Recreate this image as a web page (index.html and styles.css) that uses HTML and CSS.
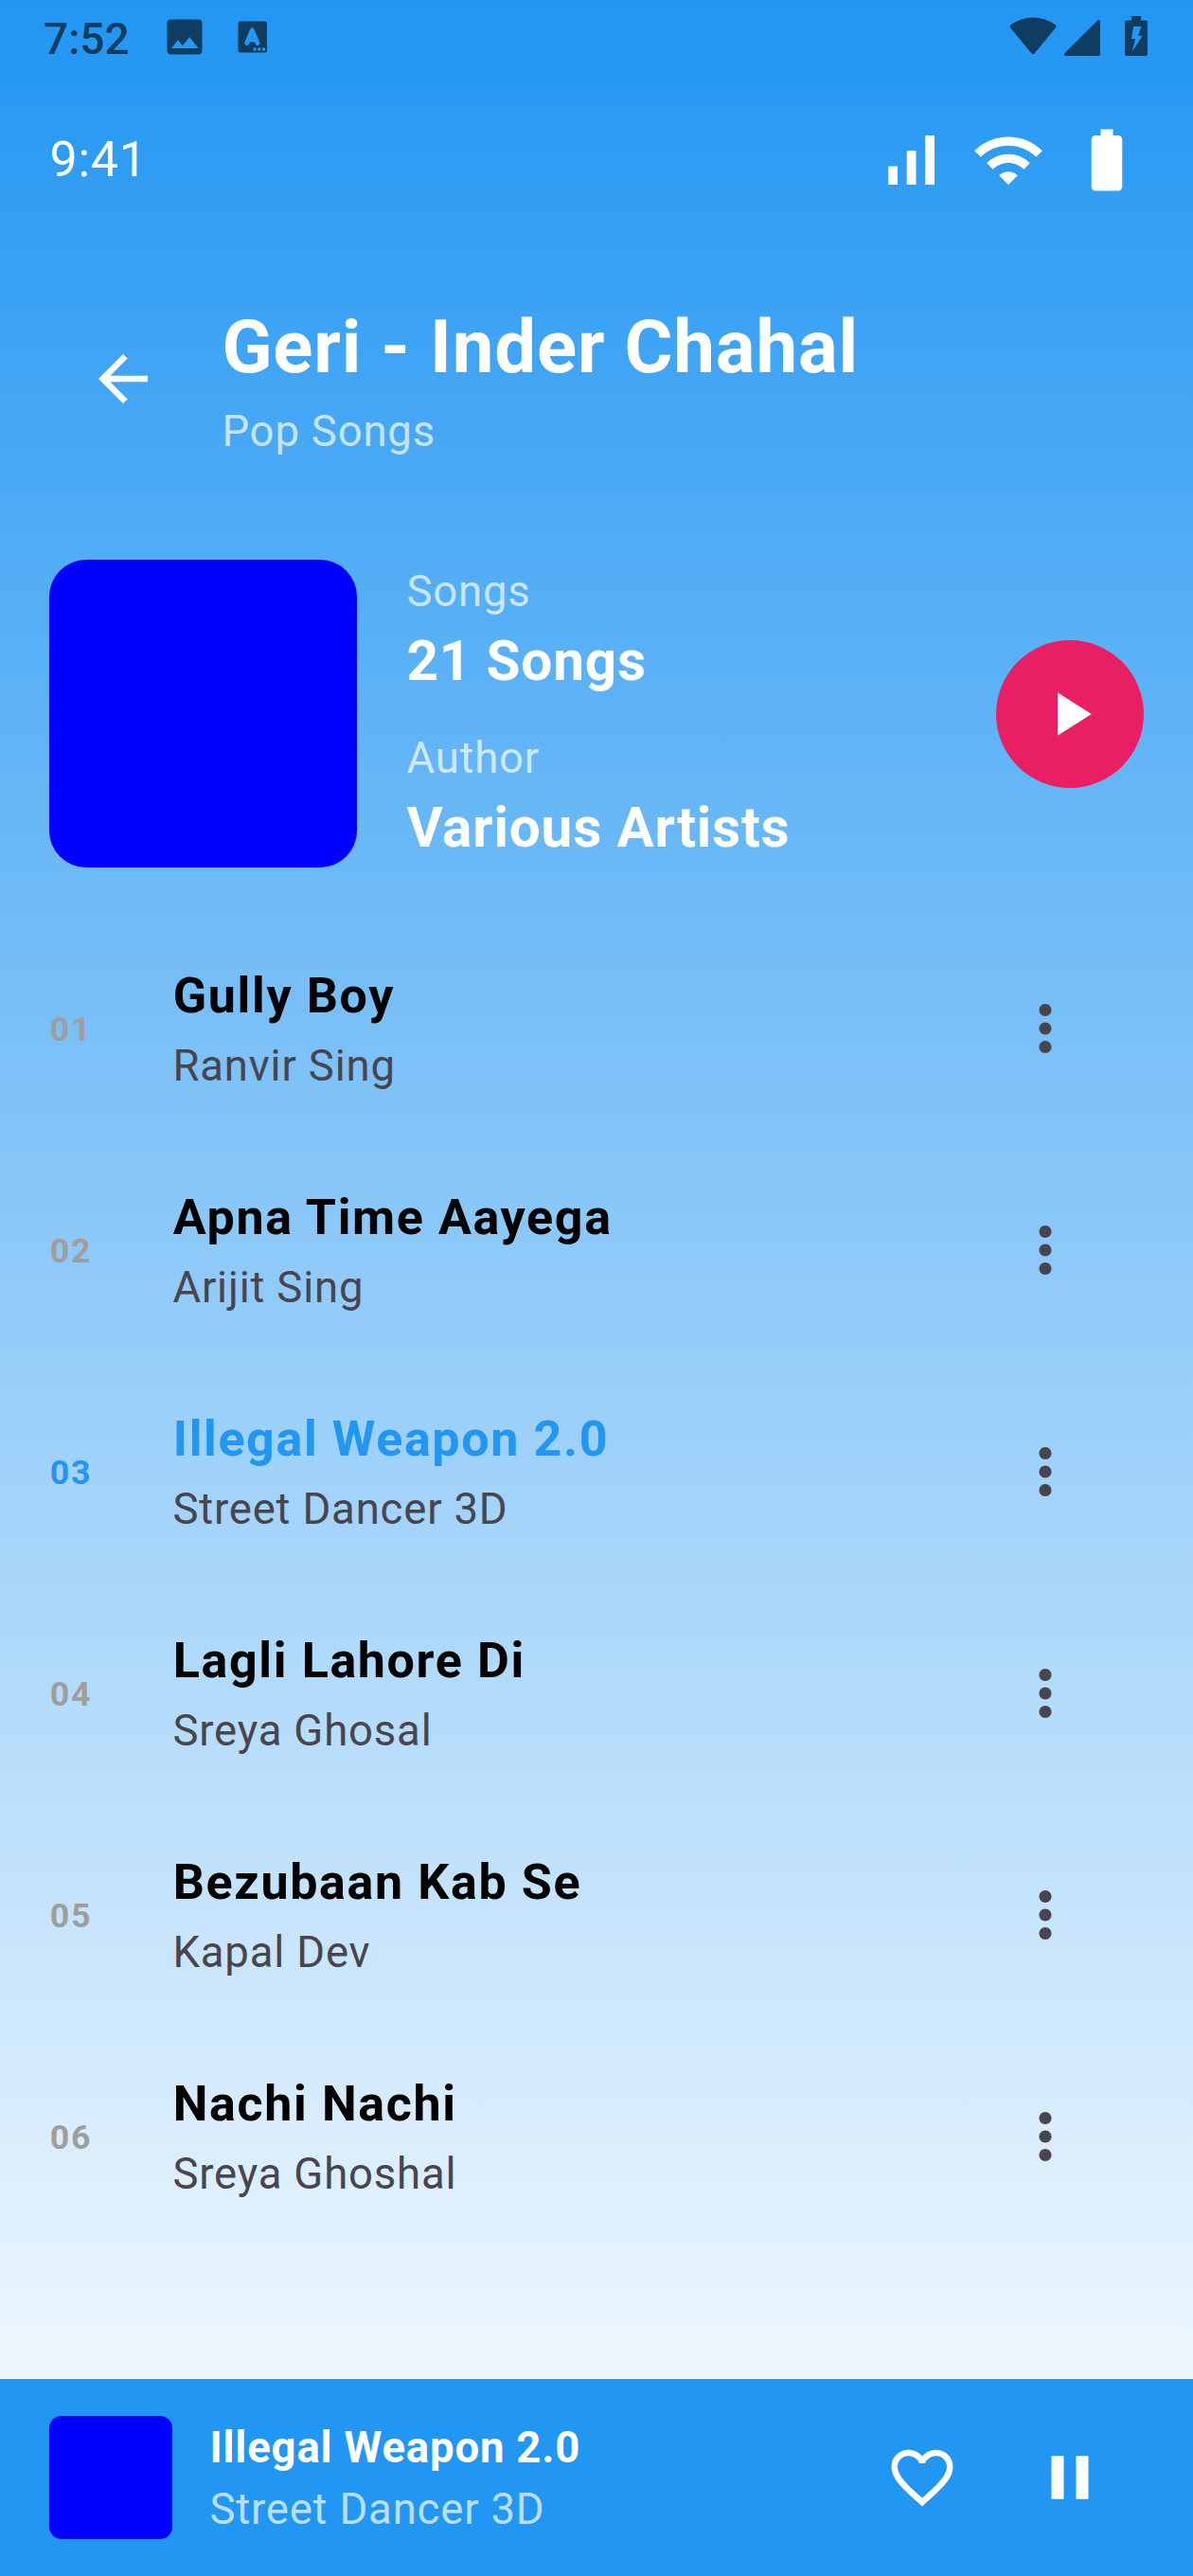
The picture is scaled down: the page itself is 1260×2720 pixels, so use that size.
FILE: index.html
```html
<!DOCTYPE html>
<html lang="en">
<head>
<meta charset="utf-8">
<title>Geri - Inder Chahal</title>
<link rel="stylesheet" href="styles.css">
</head>
<body>
<svg class="defs" width="0" height="0" aria-hidden="true">
  <symbol id="more" viewBox="0 0 24 24"><path d="M12 8c1.1 0 2-.9 2-2s-.9-2-2-2-2 .9-2 2 .9 2 2 2zm0 2c-1.1 0-2 .9-2 2s.9 2 2 2 2-.9 2-2-.9-2-2-2zm0 6c-1.1 0-2 .9-2 2s.9 2 2 2 2-.9 2-2-.9-2-2-2z"/></symbol>
</svg>
<main class="screen">
  <div class="system-bar">
    <span class="system-time">7:52</span>
    <svg class="sys-image" viewBox="0 0 38 38"><path fill-rule="evenodd" d="M4 0.5h29.500a4 4 0 0 1 4 4v29a4 4 0 0 1-4 4H4.500a4 4 0 0 1-4-4v-29a4 4 0 0 1 4-4zM5 31h28.500L24.200 19l-7.400 9.200-5-6z"/></svg>
    <svg class="sys-lang" viewBox="0 0 32 34"><path fill-rule="evenodd" d="M3 0.500h25.500a2.500 2.500 0 0 1 2.500 2.500v28a2.500 2.500 0 0 1-2.500 2.500H3A2.500 2.500 0 0 1 .5 31V3A2.500 2.500 0 0 1 3 .5zM16.500 28.500v3h3v-3zM21.300 28.500v3h3v-3zM26 28.500v3h3v-3z"/><path class="sys-lang-mark" d="M9.700 23.500L15.300 9.800L21 23.500M11.500 20h8"/></svg>
    <span class="spacer"></span>
    <svg class="sys-wifi" viewBox="0 0 50 40"><path d="M1 8.500Q0 10 1.200 11.500L23.500 38.500Q25 40 26.500 38.500L48.800 11.500Q50 10 49 8.500C34-2.300 16-2.300 1 8.500z"/></svg>
    <svg class="sys-cell" viewBox="0 0 38 38"><path d="M35 .7Q38-1 38 2V36.500Q38 38 36.500 38H1.500Q-1 38 .5 35z"/></svg>
    <svg class="sys-battery" viewBox="0 0 24 42"><path fill-rule="evenodd" d="M7 0h10v4.500h5a2 2 0 0 1 2 2V40a2 2 0 0 1-2 2H2a2 2 0 0 1-2-2V6.500a2 2 0 0 1 2-2h5zM9 11L7 24h4.200L7.500 38L18.500 20.800H14L17.500 11z"/></svg>
  </div>

  <div class="status-bar">
    <span class="status-time">9:41</span>
    <svg class="icon" viewBox="0 0 24 24"><path d="M17 4h3v16h-3zM5 14h3v6H5zM11 9h3v11h-3z"/></svg>
    <svg class="icon" viewBox="0 0 24 24"><path d="M1 9l2 2c4.970-4.970 13.030-4.970 18 0l2-2C16.930 2.930 7.080 2.930 1 9zm8 8l3 3 3-3c-1.650-1.660-4.340-1.660-6 0zm-4-4l2 2c2.760-2.760 7.240-2.760 10 0l2-2C15.140 9.140 8.870 9.140 5 13z"/></svg>
    <svg class="icon" viewBox="0 0 24 24"><path d="M15.670 4H14V2h-4v2H8.330C7.600 4 7 4.600 7 5.330v15.330C7 21.400 7.600 22 8.330 22h7.330c.74 0 1.340-.6 1.340-1.330V5.330C17 4.600 16.400 4 15.670 4z"/></svg>
  </div>

  <header class="header">
    <button class="icon-button" aria-label="Back"><svg class="icon" viewBox="0 0 24 24"><path d="M20 11H7.830l5.590-5.590L12 4l-8 8 8 8 1.410-1.410L7.830 13H20v-2z"/></svg></button>
    <div class="header-text">
      <h1 class="title">Geri - Inder Chahal</h1>
      <p class="label">Pop Songs</p>
    </div>
  </header>

  <section class="album">
    <div class="cover"></div>
    <div class="facts">
      <p class="label">Songs</p>
      <p class="fact">21 Songs</p>
      <p class="label label-author">Author</p>
      <p class="fact">Various Artists</p>
    </div>
    <button class="icon-button play" aria-label="Play"><svg class="icon" viewBox="0 0 24 24"><path d="M8 5v14l11-7z"/></svg></button>
  </section>

  <ol class="tracks">
    <li class="track"><span class="number">01</span><div class="track-text"><p class="track-title">Gully Boy</p><p class="artist">Ranvir Sing</p></div><button class="icon-button more" aria-label="More"><svg class="icon"><use href="#more"/></svg></button></li>
    <li class="track"><span class="number">02</span><div class="track-text"><p class="track-title">Apna Time Aayega</p><p class="artist">Arijit Sing</p></div><button class="icon-button more" aria-label="More"><svg class="icon"><use href="#more"/></svg></button></li>
    <li class="track active"><span class="number">03</span><div class="track-text"><p class="track-title">Illegal Weapon 2.0</p><p class="artist">Street Dancer 3D</p></div><button class="icon-button more" aria-label="More"><svg class="icon"><use href="#more"/></svg></button></li>
    <li class="track"><span class="number">04</span><div class="track-text"><p class="track-title">Lagli Lahore Di</p><p class="artist">Sreya Ghosal</p></div><button class="icon-button more" aria-label="More"><svg class="icon"><use href="#more"/></svg></button></li>
    <li class="track"><span class="number">05</span><div class="track-text"><p class="track-title">Bezubaan Kab Se</p><p class="artist">Kapal Dev</p></div><button class="icon-button more" aria-label="More"><svg class="icon"><use href="#more"/></svg></button></li>
    <li class="track"><span class="number">06</span><div class="track-text"><p class="track-title">Nachi Nachi</p><p class="artist">Sreya Ghoshal</p></div><button class="icon-button more" aria-label="More"><svg class="icon"><use href="#more"/></svg></button></li>
  </ol>

  <footer class="player">
    <div class="thumb"></div>
    <div class="player-text">
      <p class="player-title">Illegal Weapon 2.0</p>
      <p class="label">Street Dancer 3D</p>
    </div>
    <button class="icon-button" aria-label="Like"><svg class="icon" viewBox="0 0 24 24"><path d="M16.500 3c-1.740 0-3.410.81-4.500 2.090C10.910 3.810 9.240 3 7.500 3 4.420 3 2 5.420 2 8.500c0 3.780 3.400 6.860 8.550 11.540L12 21.350l1.450-1.320C18.600 15.360 22 12.280 22 8.500 22 5.420 19.580 3 16.500 3zm-4.400 15.550l-.1.100-.1-.1C7.140 14.240 4 11.390 4 8.500 4 6.500 5.500 5 7.500 5c1.540 0 3.040.99 3.570 2.360h1.870C13.460 5.990 14.960 5 16.500 5c2 0 3.500 1.500 3.500 3.500 0 2.890-3.140 5.740-7.900 10.050z"/></svg></button>
    <button class="icon-button" aria-label="Pause"><svg class="icon" viewBox="0 0 24 24"><path d="M6 19h4V5H6v14zm8-14v14h4V5h-4z"/></svg></button>
  </footer>
</main>
</body>
</html>
```
FILE: styles.css
```css
* { box-sizing: border-box; }

body, h1, p, ol { margin: 0; padding: 0; }

body { font-family: Roboto, sans-serif; }

.defs { display: block; height: 0; }

.screen {
  width: 1260px;
  height: 2720px;
  display: flex;
  flex-direction: column;
  color: #fff;
  background: linear-gradient(#2196f3, #fff);
}

.spacer { flex: 1; }

.icon { display: block; width: 78px; height: 78px; fill: currentColor; }

.icon-button {
  width: 156px;
  height: 156px;
  flex: none;
  display: grid;
  place-items: center;
  padding: 0;
  border: 0;
  border-radius: 50%;
  background: none;
  color: inherit;
}

/* Device status bar */
.system-bar {
  height: 78px;
  flex: none;
  display: flex;
  align-items: flex-start;
  padding: 17px 48px 0 46px;
  color: #0f3c61;
}
.system-bar svg { fill: currentColor; flex: none; }
.system-time { width: 130px; font-size: 46px; line-height: 48px; font-weight: 500; }
.sys-image { width: 38px; height: 38px; margin-top: 3px; }
.sys-lang { width: 32px; height: 34px; margin: 5px 0 0 37px; }
.system-bar .sys-lang-mark { fill: none; stroke: #2497f4; stroke-width: 4.800px; stroke-linecap: round; stroke-linejoin: round; }
.sys-wifi { width: 50px; height: 40px; margin-top: 1px; }
.sys-cell { width: 38px; height: 38px; margin: 4px 0 0 8px; }
.sys-battery { width: 24px; height: 42px; margin-left: 26px; }

/* In-app status bar */
.status-bar { height: 182px; flex: none; display: flex; align-items: center; gap: 26px; padding: 0 52px; }
.status-time { flex: 1; font-size: 52px; line-height: 74px; letter-spacing: .8125px; text-indent: .4px; }

/* Header */
.header { height: 280px; flex: none; display: flex; align-items: center; gap: 26px; padding: 0 52px; }
.header-text { padding-top: 2.500px; }
.title { margin-bottom: 4.500px; font-size: 78px; line-height: 104px; font-weight: 700; letter-spacing: .8125px; text-indent: .4px; }
.label { font-size: 45.500px; line-height: 65px; letter-spacing: .8125px; text-indent: .4px; color: rgba(255, 255, 255, .7); }

/* Album summary */
.album { height: 325px; margin-top: 51px; flex: none; display: flex; align-items: center; gap: 52px; padding: 0 52px; }
.cover { width: 325px; height: 325px; flex: none; border-radius: 39px; background: #00f; }
.facts { flex: 1; }
.fact { font-size: 58.500px; line-height: 82px; font-weight: 700; letter-spacing: .8125px; text-indent: .4px; }
.label-author { margin-top: 29px; }
.play { background: #e91e63; }

/* Track list */
.tracks { list-style: none; margin-top: 53px; flex: 1; }
.track { height: 234px; display: flex; align-items: center; padding: 0 78px 0 52px; }
.number { width: 130px; flex: none; padding-top: 2px; font-size: 35.750px; line-height: 52px; font-weight: 700; letter-spacing: 1.625px; text-indent: .8px; color: #9e9e9e; }
.track-text { flex: 1; padding-bottom: 1.500px; }
.track-title { margin-bottom: 2.500px; font-size: 52px; line-height: 78px; font-weight: 700; letter-spacing: 1.625px; text-indent: .8px; color: #000; }
.artist { font-size: 45.500px; line-height: 65px; letter-spacing: .8125px; text-indent: .4px; color: #49454f; }
.more { color: #49454f; }
.active .number, .active .track-title { color: #2196f3; }

/* Player bar */
.player { height: 208px; flex: none; display: flex; align-items: center; padding: 0 52px; background: #2196f3; }
.thumb { width: 130px; height: 130px; margin-right: 39px; border-radius: 13px; background: #00f; }
.player-text { flex: 1; padding-top: 2px; }
.player-title { font-size: 45.500px; line-height: 65px; font-weight: 700; letter-spacing: .8125px; text-indent: .4px; }
```
